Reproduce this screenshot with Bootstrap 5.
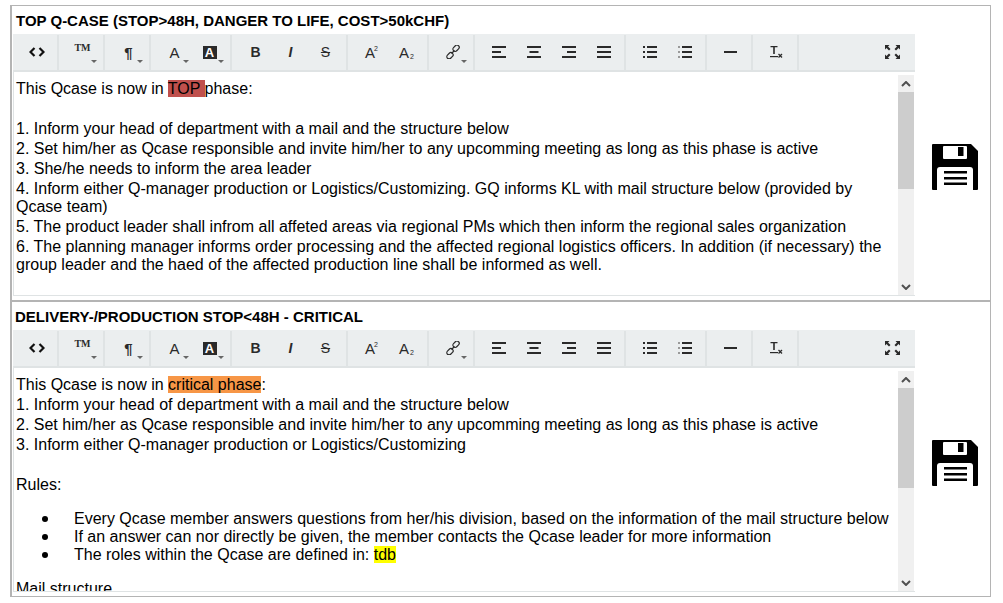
<!DOCTYPE html>
<html lang="en">
<head>
  <meta charset="UTF-8">
  <title>Qcase phases</title>
  <link href="https://cdn.jsdelivr.net/npm/bootstrap@5.3.3/dist/css/bootstrap.min.css" rel="stylesheet">
  <style>
    body { font-family: "Liberation Sans", Arial, sans-serif; background: #fff; color: #000; }
    .frame { margin: 5px 12px 0 10px; height: 592px; border: 1px solid #b4b4b4; border-left-width: 2px; }
    .phase { height: 296px; border-bottom: 2px solid #b4b4b4; }
    .phase:last-child { height: 294px; border-bottom: 0; }
    .phase-main { width: 902px; margin-left: 1px; }
    .phase-title { height: 28px; padding: 7px 0 0 3px; font-size: 15px; line-height: 16px; font-weight: 700; white-space: nowrap; }
    .phase-title-b { padding: 7px 0 0 2px; }
    .tools { height: 38px; background: #ebeeef; border-bottom: 2px solid #dfe3e4; }
    .tool-group { padding: 0 3px 0 6px; border-right: 2px solid #dfe3e4; height: 35px; margin-top: 1px; }
    .tool-group:last-child { border-right: 0; margin-left: auto; padding-right: 5px; }
    .tool { position: relative; width: 35px; height: 34px; color: #2a2a2a; font-size: 14px; line-height: 1; }
    .tool svg { display: block; }
    .caret-mark { position: absolute; right: 3px; bottom: 6px; border: 3.5px solid transparent; border-top-color: #666; border-bottom-width: 0; }
    .glyph-b { font-weight: 700; font-size: 14px; }
    .glyph-i { font-style: italic; font-weight: 700; font-size: 14px; }
    .glyph-s { text-decoration: line-through; font-size: 14px; }
    .glyph-tm { font-family: "Liberation Serif", serif; font-weight: 700; font-size: 10px; margin-top: -8px; }
    .glyph-p { font-weight: 700; font-size: 15px; }
    .glyph-a { font-size: 15px; }
    .glyph-box { background: #2a2a2a; color: #fff; width: 14px; height: 13px; font-size: 13px; font-weight: 700; line-height: 13px; text-align: center; }
    .glyph-ab { font-size: 15px; font-weight: 400; }
    .glyph-ab sup, .glyph-ab sub { font-size: 7px; }
    .glyph-ab sup { top: -.9em; margin-left: -1px; }
    .glyph-ab sub { bottom: -.2em; margin-left: 1px; }
    .body-wrap { height: 224px; border-left: 1px solid #dfe3e4; border-bottom: 1px solid #dfe3e4; }
    .body-text { padding: 8px 3px 0 2px; font-size: 16px; line-height: 18px; overflow: hidden; min-width: 0; }
    .body-text > div { margin-bottom: 2px; min-height: 18px; }
    .body-text ul { list-style: none; margin: 16px 0; padding-left: 58px; }
    .body-text li::before { content: ""; display: inline-block; width: 6px; height: 6px; border-radius: 50%; background: #000; margin-left: -32px; margin-right: 26px; vertical-align: 2px; }
    .hl-top { background: #c0504d; }
    .hl-crit { background: #f79646; }
    .hl-tdb { background: #ff0; }
    .fake-scroll { width: 16px; margin: 3px 1px 0 0; background: #f0f0f0; flex: none; }
    .scroll-btn { height: 17px; }
    .scroll-thumb { background: #cdcdcd; }
    .thumb-a { height: 97px; }
    .thumb-b { height: 100px; }
    .save-col { width: 75px; padding-left: 17px; padding-top: 138px; }
  </style>
</head>
<body>

<div class="frame">
  <div class="phase d-flex">
    <div class="phase-main">
      <div class="phase-title">TOP Q-CASE (STOP&gt;48H, DANGER TO LIFE, COST&gt;50kCHF)</div>
      <div class="tools d-flex tool-slot"></div>
      <div class="body-wrap d-flex">
        <div class="body-text flex-grow-1">
          <div>This Qcase is now in <span class="hl-top">TOP </span>phase:</div>
          <div></div>
          <div>1. Inform your head of department with a mail and the structure below</div>
          <div>2. Set him/her as Qcase responsible and invite him/her to any upcomming meeting as long as this phase is active</div>
          <div>3. She/he needs to inform the area leader</div>
          <div>4. Inform either Q-manager production or Logistics/Customizing. GQ informs KL with mail structure below (provided by Qcase team)</div>
          <div>5. The product leader shall infrom all affeted areas via regional PMs which then inform the regional sales organization</div>
          <div>6. The planning manager informs order processing and the affected regional logistics officers. In addition (if necessary) the group leader and the haed of the affected production line shall be informed as well.</div>
        </div>
        <div class="fake-scroll d-flex flex-column">
          <div class="scroll-btn d-flex align-items-center justify-content-center"><svg width="10" height="6" viewBox="0 0 10 6"><path d="M1 5l4-4 4 4" fill="none" stroke="#505050" stroke-width="2"/></svg></div>
          <div class="scroll-thumb thumb-a"></div>
          <div class="scroll-btn d-flex align-items-center justify-content-center mt-auto"><svg width="10" height="6" viewBox="0 0 10 6"><path d="M1 1l4 4 4-4" fill="none" stroke="#505050" stroke-width="2"/></svg></div>
        </div>
      </div>
    </div>
    <div class="save-col save-slot"></div>
  </div>

  <div class="phase d-flex">
    <div class="phase-main">
      <div class="phase-title phase-title-b">DELIVERY-/PRODUCTION STOP&lt;48H - CRITICAL</div>
      <div class="tools d-flex tool-slot"></div>
      <div class="body-wrap d-flex">
        <div class="body-text flex-grow-1">
          <div>This Qcase is now in <span class="hl-crit">critical phase</span>:</div>
          <div>1. Inform your head of department with a mail and the structure below</div>
          <div>2. Set him/her as Qcase responsible and invite him/her to any upcomming meeting as long as this phase is active</div>
          <div>3. Inform either Q-manager production or Logistics/Customizing</div>
          <div></div>
          <div>Rules:</div>
          <ul>
            <li>Every Qcase member answers questions from her/his division, based on the information of the mail structure below</li>
            <li>If an answer can nor directly be given, the member contacts the Qcase leader for more information</li>
            <li>The roles within the Qcase are defined in: <span class="hl-tdb">tdb</span></li>
          </ul>
          <div>Mail structure</div>
        </div>
        <div class="fake-scroll d-flex flex-column">
          <div class="scroll-btn d-flex align-items-center justify-content-center"><svg width="10" height="6" viewBox="0 0 10 6"><path d="M1 5l4-4 4 4" fill="none" stroke="#505050" stroke-width="2"/></svg></div>
          <div class="scroll-thumb thumb-b"></div>
          <div class="scroll-btn d-flex align-items-center justify-content-center mt-auto"><svg width="10" height="6" viewBox="0 0 10 6"><path d="M1 1l4 4 4-4" fill="none" stroke="#505050" stroke-width="2"/></svg></div>
        </div>
      </div>
    </div>
    <div class="save-col save-slot"></div>
  </div>
</div>

<script src="https://cdn.jsdelivr.net/npm/bootstrap@5.3.3/dist/js/bootstrap.bundle.min.js"></script>
<script>
const caret = '<span class="caret-mark"></span>';
const lines = (rows) => `<svg width="14" height="12" viewBox="0 0 14 12">${rows.map((r, i) => `<rect x="${r[0]}" y="${i * 5}" width="${r[1]}" height="2" fill="#2a2a2a"/>`).join('')}</svg>`;

const groups = [
  ['<svg width="16" height="10" viewBox="0 0 16 10"><path d="M5.500 1L1.500 5l4 4M10.500 1l4 4-4 4" fill="none" stroke="#111" stroke-width="2.200"/></svg>'],
  ['<span class="glyph-tm">TM</span>' + caret],
  ['<span class="glyph-p">¶</span>' + caret],
  ['<span class="glyph-a">A</span>' + caret, '<span class="glyph-box">A</span>' + caret],
  ['<span class="glyph-b">B</span>', '<span class="glyph-i">I</span>', '<span class="glyph-s">S</span>'],
  ['<span class="glyph-ab">A<sup>2</sup></span>', '<span class="glyph-ab">A<sub>2</sub></span>'],
  ['<svg width="14" height="14" viewBox="0 0 14 14"><g fill="none" stroke="#2a2a2a" stroke-width="1.200"><rect x="6.500" y="1" width="7" height="4.500" rx="2.200" transform="rotate(-45 10 3.200)"/><rect x="0.500" y="8.500" width="7" height="4.500" rx="2.200" transform="rotate(-45 4 10.800)"/><path d="M5.500 8.500l3-3"/></g></svg>' + caret],
  [lines([[0, 14], [0, 9], [0, 14]]), lines([[0, 14], [2.5, 9], [0, 14]]), lines([[0, 14], [5, 9], [0, 14]]), lines([[0, 14], [0, 14], [0, 14]])],
  ['<svg width="14" height="12" viewBox="0 0 14 12"><g fill="#2a2a2a"><rect y="0" width="2" height="2"/><rect y="5" width="2" height="2"/><rect y="10" width="2" height="2"/><rect x="4" y="0" width="10" height="2"/><rect x="4" y="5" width="10" height="2"/><rect x="4" y="10" width="10" height="2"/></g></svg>',
   '<svg width="14" height="12" viewBox="0 0 14 12"><g fill="#999"><rect y="0" width="2" height="2"/><rect y="5" width="2" height="2"/><rect y="10" width="2" height="2"/></g><g fill="#2a2a2a"><rect x="4" y="0" width="10" height="2"/><rect x="4" y="5" width="10" height="2"/><rect x="4" y="10" width="10" height="2"/></g></svg>'],
  ['<svg width="13" height="2" viewBox="0 0 13 2"><rect width="13" height="2" fill="#2a2a2a"/></svg>'],
  ['<svg width="13" height="14" viewBox="0 0 13 14"><path d="M0.500 1h7v1.200H4.800V9H3.200V2.200H0.500z" fill="#2a2a2a"/><rect x="0" y="11" width="8" height="1.200" fill="#2a2a2a"/><path d="M8.500 9l3.500 3.500M12 9l-3.500 3.500" stroke="#2a2a2a" stroke-width="1.300"/></svg>'],
  ['<svg width="15" height="14" viewBox="0 0 15 14"><g fill="#2a2a2a"><path d="M0 0h4.500L3 1.500 5.500 4 4 5.500 1.500 3 0 4.500z"/><path d="M15 0h-4.500L12 1.500 9.500 4 11 5.500 13.500 3 15 4.500z"/><path d="M0 14h4.500L3 12.500 5.500 10 4 8.500 1.500 11 0 9.500z"/><path d="M15 14h-4.500L12 12.500 9.500 10 11 8.500 13.500 11 15 9.500z"/></g></svg>']
];

const toolbarHtml = groups.map(g =>
  `<div class="tool-group d-flex">${g.map(t => `<div class="tool d-flex align-items-center justify-content-center">${t}</div>`).join('')}</div>`
).join('');

const saveHtml = `<svg width="46" height="46" viewBox="0 0 46 46">
  <path d="M1 0h38l7 7v38a1 1 0 0 1-1 1H1a1 1 0 0 1-1-1V1a1 1 0 0 1 1-1z" fill="#000"/>
  <rect x="11" y="2" width="24" height="13" rx="1" fill="#fff"/>
  <rect x="26" y="3" width="5.500" height="9" fill="#000"/>
  <path d="M8 23h30a3 3 0 0 1 3 3v20H5V26a3 3 0 0 1 3-3z" fill="#fff"/>
  <rect x="12" y="27" width="23" height="2.500" fill="#000"/>
  <rect x="12" y="33" width="23" height="2.500" fill="#000"/>
  <rect x="12" y="38.500" width="23" height="2.500" fill="#000"/>
</svg>`;

document.querySelectorAll('.tool-slot').forEach(el => { el.innerHTML = toolbarHtml; });
document.querySelectorAll('.save-slot').forEach(el => { el.innerHTML = saveHtml; });
</script>
</body>
</html>
